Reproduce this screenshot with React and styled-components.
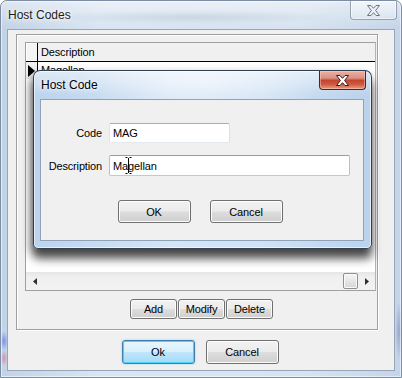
import React from 'react';
import styled, { createGlobalStyle, css } from 'styled-components';

const Global = createGlobalStyle`
  html, body { margin: 0; padding: 0; background: #ffffff; }
  body { width: 402px; height: 378px; overflow: hidden; font-family: "Liberation Sans", Arial, sans-serif; }
  #root { width: 402px; height: 378px; }
  * { box-sizing: border-box; }
`;

const Window = styled.div`
  position: relative;
  width: 402px;
  height: 378px;
  display: flex;
  flex-direction: column;
  padding: 0 6px 6px 6px;
  border: 1px solid #7c8da3;
  border-radius: 7px 7px 0 0;
  box-shadow: inset 0 0 0 1px rgba(255, 255, 255, 0.55);
  background:
    linear-gradient(to bottom, rgba(255, 255, 255, 0.45), rgba(255, 255, 255, 0) 26px),
    radial-gradient(ellipse 150px 7px at 190px 16px, rgba(110, 128, 155, 0.22), transparent),
    radial-gradient(ellipse 4px 10px at 3px 340px, rgba(70, 90, 230, 0.55), transparent),
    radial-gradient(ellipse 4px 8px at 3px 357px, rgba(220, 90, 120, 0.5), transparent),
    radial-gradient(ellipse 4px 30px at 398px 330px, rgba(60, 80, 150, 0.35), transparent),
    linear-gradient(to right, #c3d3e6, #d9e5f2 25%, #d7e3f0 75%, #c5d5e8);
`;

const TitleBar = styled.div`
  height: 28px;
  display: flex;
  justify-content: space-between;
  align-items: flex-start;
  flex-shrink: 0;
`;

const TitleText = styled.div`
  margin-top: 7px;
  padding-left: ${p => p.$indent ?? 1}px;
  font-size: 12px;
  line-height: 14px;
  color: ${p => (p.$active ? '#000000' : '#1b1b1b')};
  text-shadow: 0 0 6px rgba(255, 255, 255, 0.95), 0 0 3px rgba(255, 255, 255, 0.9);
`;

const CloseButton = styled.div`
  width: 47px;
  height: 19px;
  margin-right: ${p => p.$mr || 0}px;
  display: flex;
  align-items: center;
  justify-content: center;
  border-radius: 0 0 4px 4px;
  border: 1px solid;
  border-top: none;
  ${p =>
    p.$active
      ? css`
          border-color: #4a2424;
          background: linear-gradient(to bottom, #eab2a6 0%, #db8f80 40%, #c4442e 52%, #cd5c44 75%, #e8a080 100%);
          box-shadow: inset 0 0 0 1px rgba(255, 210, 200, 0.45);
        `
      : css`
          border-color: rgba(70, 85, 105, 0.5);
          background: linear-gradient(to bottom, rgba(255, 255, 255, 0.55), rgba(255, 255, 255, 0.2));
          box-shadow: inset 0 0 0 1px rgba(255, 255, 255, 0.5);
        `}
`;

const XGlyph = ({ fill, stroke }) => (
  <svg width="13" height="11" viewBox="0 0 13 11">
    <polygon
      points="0.5,0.5 4,0.5 6.5,3.3 9,0.5 12.5,0.5 8.6,5.5 12.5,10.5 9,10.5 6.5,7.7 4,10.5 0.5,10.5 4.4,5.5"
      fill={fill}
      stroke={stroke}
      strokeWidth="1"
      strokeLinejoin="round"
    />
  </svg>
);

const Client = styled.div`
  flex: 1;
  display: flex;
  flex-direction: column;
  background: #f0f0f0;
  border: 1px solid #95a5ba;
  padding: 4px 16px 0 8px;
`;

const GroupBox = styled.div`
  height: 296px;
  display: flex;
  flex-direction: column;
  border: 1px solid #a0a0a0;
  box-shadow: inset 1px 1px 0 #ffffff, 1px 1px 0 #ffffff;
  padding: 7px 1px 10px 8px;
`;

const Grid = styled.div`
  height: 249px;
  display: flex;
  flex-direction: column;
  border: 1px solid #a0a0a0;
  border-right-color: #b4b4b4;
  background: #ffffff;
`;

const HeaderRow = styled.div`
  height: 19px;
  display: flex;
  background: #f0f0f0;
  border-bottom: 1px solid #000000;
  flex-shrink: 0;
`;

const IndicatorCell = styled.div`
  width: 12px;
  border-right: 1px solid #000000;
  display: flex;
  align-items: center;
  padding-left: 2px;
  background: ${p => (p.$head ? '#f4f4f4' : '#f0f0f0')};
  box-shadow: ${p => (p.$head ? 'inset 1px 1px 0 #ffffff' : 'none')};
`;

const Cell = styled.div`
  flex: 1;
  padding-left: 3px;
  font-size: 11px;
  letter-spacing: -0.15px;
  line-height: ${p => p.$h}px;
  color: #000000;
`;

const Body = styled.div`
  flex: 1;
  display: flex;
  flex-direction: column;
  background: #ffffff;
`;

const Row = styled.div`
  height: 17px;
  display: flex;
`;

const ScrollBar = styled.div`
  height: 18px;
  display: flex;
  align-items: center;
  background: linear-gradient(to bottom, #e6e6e6, #f0f0f0 30%, #f2f2f2);
  flex-shrink: 0;
`;

const ScrollArrow = styled.div`
  width: 17px;
  height: 18px;
  display: flex;
  align-items: center;
  justify-content: center;
`;

const ScrollTrack = styled.div`
  flex: 1;
`;

const Thumb = styled.div`
  width: 15px;
  height: 16px;
  border: 1px solid #8e8f8f;
  border-radius: 2px;
  background: linear-gradient(to bottom, #f5f5f5, #e6e6e6 50%, #d6d6d6);
  box-shadow: inset 0 0 0 1px #fafafa;
`;

const ButtonRow = styled.div`
  display: flex;
  justify-content: center;
  gap: ${p => p.$gap}px;
  margin-top: ${p => p.$mt}px;
  padding-left: ${p => p.$pl || 0}px;
  padding-right: ${p => p.$pr || 0}px;
`;

const Button = styled.div`
  width: ${p => p.$w}px;
  height: ${p => p.$h}px;
  display: flex;
  align-items: center;
  justify-content: center;
  font-size: 11px;
  letter-spacing: -0.15px;
  color: #000000;
  border-radius: 3px;
  border: 1px solid ${p => (p.$focus ? '#3c7fb1' : '#707070')};
  background: ${p =>
    p.$focus
      ? 'linear-gradient(to bottom, #eaf6fd 0%, #d9f0fc 48%, #bee6fd 52%, #a7d9f5 100%)'
      : 'linear-gradient(to bottom, #f2f2f2 0%, #ebebeb 48%, #dddddd 52%, #cfcfcf 100%)'};
  box-shadow: ${p =>
    p.$focus
      ? 'inset 0 0 0 1px #48d3fb, 0 0 2px rgba(60, 160, 230, 0.5)'
      : 'inset 0 0 0 1px #fcfcfc'};
`;

const Dialog = styled.div`
  position: absolute;
  left: 32px;
  top: 69px;
  width: 339px;
  height: 179px;
  display: flex;
  flex-direction: column;
  border: 1px solid rgba(25, 35, 50, 0.85);
  border-radius: 7px 7px 5px 5px;
  box-shadow:
    inset 0 0 0 1px rgba(255, 255, 255, 0.6),
    0 10px 10px rgba(0, 0, 0, 0.6),
    -2px 4px 10px rgba(0, 0, 0, 0.4);
  background:
    linear-gradient(to bottom, rgba(255, 255, 255, 0.5), rgba(255, 255, 255, 0) 24px),
    radial-gradient(ellipse 120px 40px at 170px 10px, rgba(255, 255, 255, 0.5), transparent),
    linear-gradient(to right, #bcd3ec, #d4e5f6 40%, #cfe1f4 70%, #bad2ec);
`;

const DialogTitleBar = styled(TitleBar)`
  padding-left: 7px;
  padding-right: 5px;
`;

const DialogClient = styled.div`
  flex: 1;
  margin: 0 7px 7px 6px;
  background: #f0f0f0;
  border: 1px solid #8ea2ba;
  display: flex;
  flex-direction: column;
  padding-top: 23px;
`;

const Form = styled.div`
  display: grid;
  grid-template-columns: 61px auto;
  column-gap: 7px;
  row-gap: 12px;
  align-items: center;
  justify-items: start;
`;

const Label = styled.div`
  justify-self: end;
  font-size: 11px;
  letter-spacing: -0.15px;
  color: #000000;
`;

const FieldWrap = styled.div`
  position: relative;
`;

const TextBox = styled.div`
  width: ${p => p.$w}px;
  height: ${p => p.$h}px;
  display: flex;
  align-items: center;
  padding-left: 3px;
  font-size: 11px;
  letter-spacing: -0.1px;
  color: #000000;
  background: #ffffff;
  border-radius: 2px;
  border: 1px solid;
  border-color: ${p =>
    p.$focus ? '#6fa5d8 #9ec6ea #a9cfee #9ec6ea' : '#abadb3 #dbdfe6 #e3e9ef #e2e3ea'};
`;

const Cursor = styled.svg`
  position: absolute;
  left: 16px;
  top: 2px;
`;

const Triangle = () => (
  <svg width="7" height="12" viewBox="0 0 7 12">
    <polygon points="0,0 7,6 0,12" fill="#000" />
  </svg>
);

const SmallArrow = ({ dir }) => (
  <svg width="4" height="7" viewBox="0 0 4 7">
    <polygon points={dir === 'left' ? '4,0 0,3.5 4,7' : '0,0 4,3.5 0,7'} fill="#303030" />
  </svg>
);

export default function App() {
  return (
    <>
      <Global />
      <Window>
        <TitleBar>
          <TitleText>Host Codes</TitleText>
          <CloseButton $mr={-2}>
            <XGlyph fill="#eef2f7" stroke="#6b7686" />
          </CloseButton>
        </TitleBar>
        <Client>
          <GroupBox>
            <Grid>
              <HeaderRow>
                <IndicatorCell $head />
                <Cell $h={18}>Description</Cell>
              </HeaderRow>
              <Body>
                <Row>
                  <IndicatorCell>
                    <Triangle />
                  </IndicatorCell>
                  <Cell $h={17}>Magellan</Cell>
                </Row>
              </Body>
              <ScrollBar>
                <ScrollArrow>
                  <SmallArrow dir="left" />
                </ScrollArrow>
                <ScrollTrack />
                <Thumb />
                <ScrollArrow>
                  <SmallArrow dir="right" />
                </ScrollArrow>
              </ScrollBar>
            </Grid>
            <ButtonRow $gap={1} $mt={8} $pl={2}>
              <Button $w={47} $h={20}>Add</Button>
              <Button $w={47} $h={20}>Modify</Button>
              <Button $w={47} $h={20}>Delete</Button>
            </ButtonRow>
          </GroupBox>
          <ButtonRow $gap={11} $mt={10} $pl={6}>
            <Button $w={73} $h={24} $focus>Ok</Button>
            <Button $w={73} $h={24}>Cancel</Button>
          </ButtonRow>
        </Client>

        <Dialog>
          <DialogTitleBar>
            <TitleText $active $indent={0}>Host Code</TitleText>
            <CloseButton $active>
              <XGlyph fill="#ffffff" stroke="#3a1c1c" />
            </CloseButton>
          </DialogTitleBar>
          <DialogClient>
            <Form>
              <Label>Code</Label>
              <TextBox $w={121} $h={20}>MAG</TextBox>
              <Label>Description</Label>
              <FieldWrap>
                <TextBox $w={241} $h={21} $focus>Magellan</TextBox>
                <Cursor width="7" height="17" viewBox="0 0 7 17">
                  <path d="M0.5 0.5 H2.5 M4.5 0.5 H6.5 M3.5 1 V16 M0.5 16.5 H2.5 M4.5 16.5 H6.5" stroke="#000" strokeWidth="1" fill="none" />
                </Cursor>
              </FieldWrap>
            </Form>
            <ButtonRow $gap={19} $mt={24} $pr={4}>
              <Button $w={73} $h={23}>OK</Button>
              <Button $w={73} $h={23}>Cancel</Button>
            </ButtonRow>
          </DialogClient>
        </Dialog>
      </Window>
    </>
  );
}
